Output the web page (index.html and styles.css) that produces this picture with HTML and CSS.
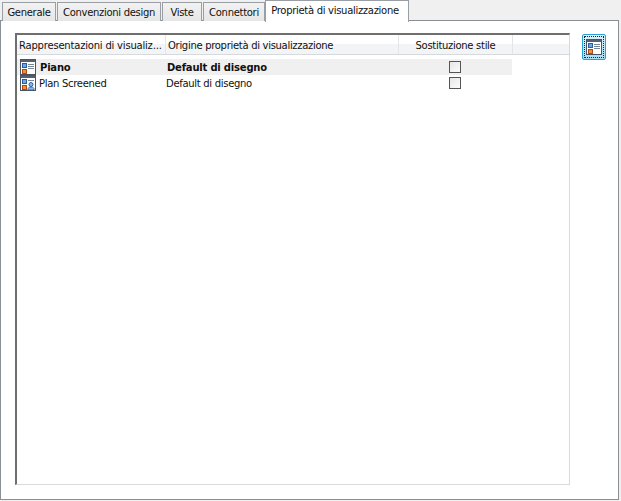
FILE: index.html
```html
<!DOCTYPE html>
<html lang="it">
<head>
<meta charset="utf-8">
<title>Proprietà di visualizzazione</title>
<link rel="stylesheet" href="styles.css">
</head>
<body>
<div class="tabs">
  <div class="tab w1">Generale</div>
  <div class="tab w2">Convenzioni design</div>
  <div class="tab w3">Viste</div>
  <div class="tab w4">Connettori</div>
  <div class="tab active">Proprietà di visualizzazione</div>
</div>
<div class="panel">
  <div class="listbox">
    <div class="header">
      <div class="hcell c1 wide">Rappresentazioni di visualiz...</div>
      <div class="hcell c2">Origine proprietà di visualizzazione</div>
      <div class="hcell c3">Sostituzione stile</div>
    </div>
    <div class="row selected">
      <div class="cell c1">
        <svg class="icon" viewBox="0 0 16 16"><rect x=".5" y=".5" width="15" height="15" fill="#fff" stroke="#4a5564"/><rect x="1" y="1" width="14" height="2" fill="#56616f"/><rect x="2.500" y="4.500" width="4" height="4" fill="#6ea6dc" stroke="#2a5f9e"/><rect x="2.500" y="10.500" width="4" height="4" fill="#f09030" stroke="#b04a10"/><path d="M8 5.500h6M8 7.500h6M8 9.500h6" stroke="#7b8695"/></svg>
        <span class="piano">Piano</span>
      </div>
      <div class="cell c2">Default di disegno</div>
      <div class="cell c3"><span class="check"></span></div>
    </div>
    <div class="row">
      <div class="cell c1">
        <svg class="icon" viewBox="0 0 16 16"><rect x=".5" y=".5" width="15" height="15" fill="#fff" stroke="#4a5564"/><rect x="1" y="1" width="14" height="2" fill="#56616f"/><rect x="2.500" y="4.500" width="4" height="4" fill="#6ea6dc" stroke="#2a5f9e"/><rect x="2.500" y="10.500" width="4" height="4" fill="#f09030" stroke="#b04a10"/><path d="M8 5.500h6" stroke="#7b8695"/><circle cx="11" cy="9.500" r="2" fill="#8ab8e6" stroke="#2a5f9e"/><path d="M8 15v-1.500l1.500-1.500h3l1.500 1.500V15z" fill="#8ab8e6" stroke="#2a5f9e" stroke-width=".8"/></svg>
        <span>Plan Screened</span>
      </div>
      <div class="cell c2 plain">Default di disegno</div>
      <div class="cell c3"><span class="check"></span></div>
    </div>
  </div>
  <div class="side">
    <div class="toolbtn">
      <svg class="toolicon" viewBox="0 0 16 16"><rect x=".5" y=".5" width="15" height="15" fill="#fff" stroke="#4a5564"/><rect x="1" y="1" width="14" height="2" fill="#56616f"/><rect x="2.500" y="4.500" width="4" height="4" fill="#6ea6dc" stroke="#2a5f9e"/><rect x="2.500" y="10.500" width="4" height="4" fill="#f09030" stroke="#b04a10"/><path d="M8 5.500h6M8 7.500h6M8 9.500h6" stroke="#7b8695"/></svg>
    </div>
  </div>
</div>
</body>
</html>
```
FILE: styles.css
```css
* { box-sizing: border-box; }
html, body { margin: 0; height: 100%; }
body {
  width: 621px;
  height: 501px;
  overflow: hidden;
  background: #f0f0f0;
  font-family: "DejaVu Sans", sans-serif;
  font-size: 10px;
  letter-spacing: -0.3px;
  color: #111;
}
.tabs {
  display: flex;
  align-items: flex-end;
  height: 21px;
  padding-left: 2px;
  gap: 1px;
  position: relative;
  z-index: 1;
}
.tab {
  height: 19px;
  line-height: 20px;
  text-align: center;
  white-space: nowrap;
  background: linear-gradient(#f2f2f2, #e6e6e6);
  border: 1px solid #9a9fa6;
  border-bottom: 0;
}
.w1 { width: 54px; }
.w2 { width: 104px; }
.w3 { width: 40px; }
.w4 { width: 62px; }
.tab.active {
  width: 144px;
  height: 22px;
  line-height: 19px;
  padding-right: 4px;
  margin-left: -1px;
  margin-bottom: -1px;
  background: #fff;
}
.panel {
  display: flex;
  height: 480px;
  width: 619px;
  margin-top: -1px;
  background: #fff;
  border: 1px solid #8a8f96;
  padding: 12px 0 0 14px;
}
.listbox {
  width: 555px;
  height: 452px;
  border-style: solid;
  border-color: #6f6f6f #d9d9d9 #d9d9d9 #6f6f6f;
  border-width: 2px 1px 1px 2px;
}
.header {
  display: flex;
  width: 552px;
  height: 20px;
  margin-bottom: 4px;
  background: linear-gradient(#fff 45%, #f3f4f6 50%);
  border-bottom: 1px solid #d6d9dd;
}
.hcell {
  line-height: 21px;
  white-space: nowrap;
  padding-left: 2px;
  border-right: 1px solid #e3e5e8;
}
.hcell.wide { letter-spacing: -0.2px; }
.hcell.c3 { text-align: center; padding-left: 0; }
.c1 { width: 149px; }
.c2 { width: 233px; }
.c3 { width: 114px; }
.row {
  display: flex;
  width: 495px;
  height: 16px;
  line-height: 17px;
}
.selected { background: #f0f0f0; font-weight: 700; letter-spacing: -0.2px; }
.cell { display: flex; align-items: center; white-space: nowrap; padding-left: 1px; }
.cell.plain { padding-left: 0; }
.cell.c1 { padding-left: 3px; gap: 3px; }
.cell.c3 { justify-content: center; padding-left: 0; width: 113px; padding-right: 1px; }
.piano { margin-left: 1px; }
.icon { width: 16px; height: 16px; flex: none; }
.check {
  width: 12px;
  height: 12px;
  background: linear-gradient(135deg, #e6e6e6, #fbfbfb);
  border: 1px solid #555;
}
.side { padding: 1px 0 0 12px; }
.toolbtn {
  width: 24px;
  height: 26px;
  display: flex;
  align-items: center;
  justify-content: center;
  border: 1px solid #2a9fd6;
  border-radius: 2px;
  outline: 1px dotted #222;
  outline-offset: -3px;
  background: linear-gradient(#d9f1fb, #a6def5);
}
.toolicon { width: 16px; height: 16px; }
```
